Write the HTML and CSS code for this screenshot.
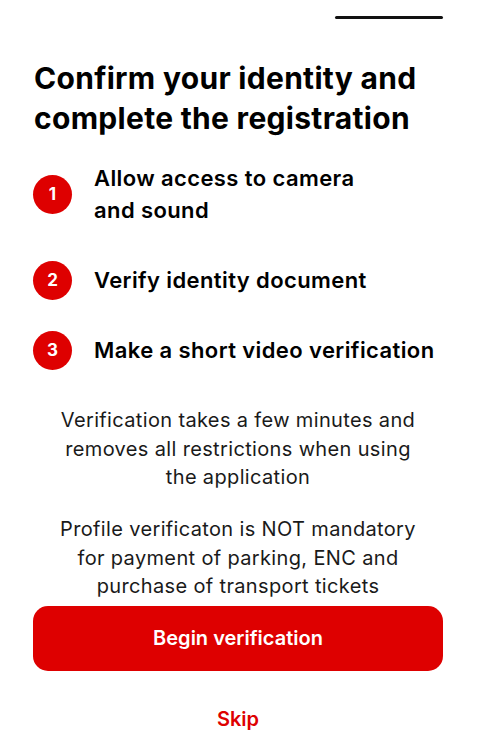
FILE: index.html
```html
<!DOCTYPE html>
<html lang="en">
<head>
<meta charset="utf-8">
<title>Confirm identity</title>
<link rel="stylesheet" href="styles.css">
</head>
<body>
<main class="sheet">
  <div class="handle-row"><span class="handle"></span></div>
  <h1 class="title">Confirm your identity and<br>complete the registration</h1>
  <ol class="steps">
    <li class="step"><span class="badge">1</span><span class="step-text">Allow access to camera<br>and sound</span></li>
    <li class="step"><span class="badge">2</span><span class="step-text">Verify identity document</span></li>
    <li class="step"><span class="badge">3</span><span class="step-text">Make a short video verification</span></li>
  </ol>
  <p class="note note-first">Verification takes a few minutes and<br>removes all restrictions when using<br>the application</p>
  <p class="note note-second">Profile verificaton is NOT mandatory<br>for payment of parking, ENC and<br>purchase of transport tickets</p>
  <button class="primary">Begin verification</button>
  <button class="link">Skip</button>
</main>
</body>
</html>
```
FILE: styles.css
```css
* { box-sizing: border-box; }
html, body { margin: 0; padding: 0; background: #fff; }
body { font-family: Inter, "Noto Sans", sans-serif; color: #000; }
.sheet {
  width: 485px;
  padding: 16px 42px 0 33px;
  display: flex;
  flex-direction: column;
}
.handle-row { display: flex; justify-content: flex-end; }
.handle { width: 108px; height: 3px; border-radius: 2px; background: #111; }
.title {
  margin: 39px 0 0 1px;
  font-size: 30px;
  line-height: 40px;
  font-weight: 700;
  letter-spacing: 0.3px;
  white-space: nowrap;
}
.steps {
  list-style: none;
  margin: 24px 0 0;
  padding: 0;
  display: flex;
  flex-direction: column;
  gap: 38px;
}
.step { display: flex; align-items: center; gap: 22px; }
.badge {
  flex: none;
  width: 39px; height: 39px;
  margin: -4px 0;
  border-radius: 50%;
  background: #DE0000;
  color: #fff;
  font-weight: 700;
  font-size: 17px;
  display: flex; align-items: center; justify-content: center;
}
.step-text {
  font-size: 22px;
  line-height: 32px;
  font-weight: 600;
  letter-spacing: 0.4px;
  white-space: nowrap;
}
.note {
  margin: 0;
  text-align: center;
  font-size: 20px;
  line-height: 28.5px;
  letter-spacing: 0.35px;
  color: #1a1a1a;
  white-space: nowrap;
}
.note-first { margin-top: 40px; }
.note-second { margin-top: 23.5px; }
.primary {
  margin-top: 5px;
  height: 65px;
  border: 0;
  border-radius: 15px;
  background: #DE0000;
  color: #fff;
  font-family: inherit;
  font-size: 20px;
  font-weight: 600;
}
.link {
  margin-top: 36px;
  border: 0;
  background: none;
  color: #DE0000;
  font-family: inherit;
  font-size: 20px;
  line-height: 24px;
  font-weight: 600;
  padding: 0;
}
```
